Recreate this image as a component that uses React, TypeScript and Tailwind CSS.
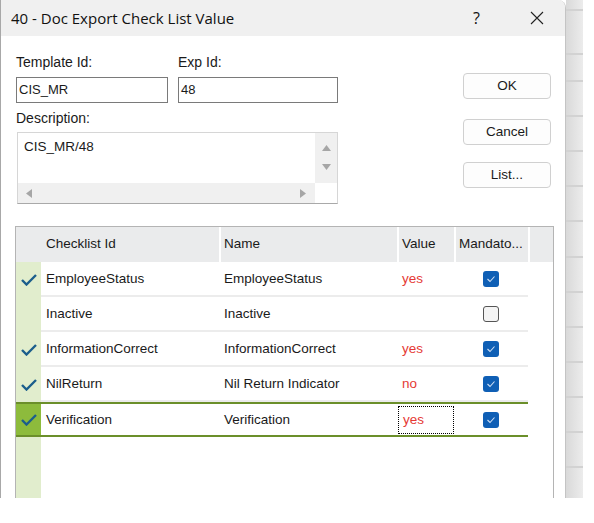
import React from "react";

const rows = [
  { id: "EmployeeStatus", name: "EmployeeStatus", value: "yes", marked: true, mandatory: true, selected: false },
  { id: "Inactive", name: "Inactive", value: "", marked: false, mandatory: false, selected: false },
  { id: "InformationCorrect", name: "InformationCorrect", value: "yes", marked: true, mandatory: true, selected: false },
  { id: "NilReturn", name: "Nil Return Indicator", value: "no", marked: true, mandatory: true, selected: false },
  { id: "Verification", name: "Verification", value: "yes", marked: true, mandatory: true, selected: true },
];

// y positions of the sheet grid lines showing behind the dialog
const sheetLines = [9, 53, 80, 115, 150, 185, 220, 256, 291, 326, 361, 396, 431, 466];

function Tick() {
  return (
    <svg width="16" height="12" viewBox="0 0 16 12">
      <path d="M1 6 L5.5 10.5 L15 1" fill="none" stroke="#1b5e8c" strokeWidth="2.4" />
    </svg>
  );
}

function Check({ on }: { on: boolean }) {
  if (!on) {
    return <div className="h-4 w-4 rounded-[3px] border border-[#555] bg-[#f4f4f4]" />;
  }
  return (
    <div className="flex h-4 w-4 items-center justify-center rounded-[3px] bg-[#0f5fb5]">
      <svg width="10" height="8" viewBox="0 0 10 8">
        <path d="M1.5 4 L4 6.5 L8.5 1.5" fill="none" stroke="#cfe0f5" strokeWidth="1.1" />
      </svg>
    </div>
  );
}

function Arrow({ dir }: { dir: "up" | "down" | "left" | "right" }) {
  const d = {
    up: "M0 7 L4.5 1 L9 7 Z",
    down: "M0 1 L4.5 7 L9 1 Z",
    left: "M7 0 L1 4.5 L7 9 Z",
    right: "M1 0 L7 4.5 L1 9 Z",
  }[dir];
  return (
    <svg width="9" height="9" viewBox="0 0 9 9">
      <path d={d} fill="#a6a6a6" />
    </svg>
  );
}

export default function App() {
  let prev = 0;
  return (
    <div className="flex h-[523px] w-[594px] items-start bg-white font-['Liberation_Sans',Arial,sans-serif] text-[13px] text-[#1a1a1a]">
      <div className="flex h-[498px] w-[566px] flex-col overflow-hidden rounded-tr-[8px] border-x border-l-[#a8a8a8] border-r-[#c4c4c4] bg-white">
        {/* title bar */}
        <div className="flex h-[36px] shrink-0 items-center bg-[#f0f0f0] pl-[10px] font-['Open_Sans',sans-serif] text-[15px] text-[#111]">
          <span>40 - Doc Export Check List Value</span>
          <span className="ml-auto mr-[50px] text-[16px]">?</span>
          <svg width="14" height="14" viewBox="0 0 14 14" className="mr-[21px]">
            <path d="M1 1 L13 13 M13 1 L1 13" stroke="#222" strokeWidth="1.1" />
          </svg>
        </div>

        <div className="flex min-h-0 flex-1 flex-col">
          <div className="flex pl-[15px] pt-[18px]">
            <div className="w-[322px]">
              <div className="flex gap-[10px]">
                <div className="w-[152px]">
                  <div className="h-4 text-[14px] leading-4">Template Id:</div>
                  <div className="mt-[7px] h-[26px] border border-[#7a7a7a] px-[2px] leading-[24px]">CIS_MR</div>
                </div>
                <div className="w-[160px]">
                  <div className="h-4 text-[14px] leading-4">Exp Id:</div>
                  <div className="mt-[7px] h-[26px] border border-[#7a7a7a] px-[2px] leading-[24px]">48</div>
                </div>
              </div>
              <div className="mt-[7px] h-4 text-[14px] leading-4">Description:</div>
              <div className="ml-px mt-[6px] flex h-[72px] w-[321px] border border-[#d6d6d6] border-b-[#a9a9a9]">
                <div className="flex flex-1 flex-col">
                  <div className="flex-1 pl-[6px] pt-[6px] text-[13.5px] leading-4">CIS_MR/48</div>
                  <div className="flex h-[20px] items-center justify-between bg-[#f0f0f0] px-[7px]">
                    <Arrow dir="left" />
                    <Arrow dir="right" />
                  </div>
                </div>
                <div className="flex w-[22px] flex-col">
                  <div className="flex flex-1 flex-col items-center justify-between bg-[#f0f0f0] py-[11px]">
                    <Arrow dir="up" />
                    <Arrow dir="down" />
                  </div>
                  <div className="h-[20px] bg-white" />
                </div>
              </div>
            </div>

            <div className="ml-[125px] mt-[19px] flex w-[88px] flex-col text-[13.5px]">
              <button className="h-[26px] rounded-[4px] border border-[#d0d0d0] bg-[#fdfdfd]">OK</button>
              <button className="mt-[20px] h-[26px] rounded-[4px] border border-[#d0d0d0] bg-[#fdfdfd]">Cancel</button>
              <button className="mt-[17px] h-[26px] rounded-[4px] border border-[#d0d0d0] bg-[#fdfdfd]">List...</button>
            </div>
          </div>

          {/* checklist grid */}
          <div className="ml-[14px] mt-[22px] flex min-h-0 w-[539px] flex-1 flex-col overflow-hidden border-x border-t border-[#b4b4b4] text-[13.5px]">
            <div className="flex h-[35px] shrink-0 items-center bg-[#eaebec]">
              <div className="w-[25px]" />
              <div className="w-[178px] pl-[5px]">Checklist Id</div>
              <div className="flex h-full w-[178px] items-center border-l-2 border-white pl-[3px]">Name</div>
              <div className="flex h-full w-[57px] items-center border-l-2 border-white pl-[3px]">Value</div>
              <div className="flex h-full w-[74px] items-center border-l-2 border-white pl-[3px]">Mandato...</div>
              <div className="h-full flex-1 border-l-2 border-white" />
            </div>

            {rows.map((r) => (
              <div key={r.id} className="flex h-[35px] shrink-0">
                <div
                  className={`flex w-[512px] ${
                    r.selected ? "border-y-2 border-[#6b8f2a]" : ""
                  }`}
                >
                  <div
                    className={`flex w-[25px] items-center justify-center ${
                      r.selected ? "bg-[#8dbb3c]" : "bg-[#e1edcd]"
                    }`}
                  >
                    {r.marked && <Tick />}
                  </div>
                  <div
                    className={`flex flex-1 items-center pt-[1px] ${
                      r.selected ? "" : "border-b-2 border-[#ececec]"
                    }`}
                  >
                    <div className="w-[178px] pl-[5px]">{r.id}</div>
                    <div className="w-[178px] pl-[5px]">{r.name}</div>
                    <div className="flex h-full w-[57px] items-center py-[1px] pl-px">
                      <div
                        className={`flex h-full w-[56px] items-center pl-[4px] text-[#e53935] ${
                          r.selected ? "border border-dotted border-black" : ""
                        }`}
                      >
                        {r.value}
                      </div>
                    </div>
                    <div className="flex w-[74px] justify-center">
                      <Check on={r.mandatory} />
                    </div>
                  </div>
                </div>
                <div className="flex-1" />
              </div>
            ))}

            <div className="flex flex-1">
              <div className="w-[25px] bg-[#e1edcd]" />
            </div>
          </div>
        </div>
      </div>

      {/* spreadsheet peeking out behind the dialog */}
      <div className="flex h-[498px] w-[17px] flex-col bg-gradient-to-r from-[#d9d9d9] to-[#ececec]">
        {sheetLines.map((y) => {
          const h = y - prev;
          prev = y + 2;
          return (
            <React.Fragment key={y}>
              <div style={{ height: h }} className="shrink-0" />
              <div className="h-[2px] shrink-0 bg-[#d2d2d2]" />
            </React.Fragment>
          );
        })}
      </div>
    </div>
  );
}
